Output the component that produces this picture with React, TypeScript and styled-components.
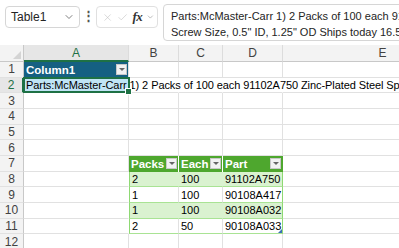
import React from "react"
import styled, { createGlobalStyle } from "styled-components"
import { ChevronDown, X, Check } from "lucide-react"

const GlobalStyle = createGlobalStyle`
    body {
        margin: 0;
        background: #ffffff;
        font-family: "Liberation Sans", Arial, sans-serif;
        overflow: hidden;
    }
`

const Page = styled.div`
    width: 399px;
    height: 248px;
    overflow: hidden;
    background: #ffffff;
`

const Toolbar = styled.div`
    display: flex;
    align-items: flex-start;
    height: 45px;
    padding: 4px 0 0 5px;
    box-sizing: border-box;
    background: #ffffff;
`

const NameBox = styled.div`
    display: flex;
    align-items: center;
    justify-content: space-between;
    width: 75px;
    height: 22px;
    margin-top: 2px;
    padding: 0 4px 0 5px;
    box-sizing: border-box;
    border: 1px solid #d6d6d6;
    border-radius: 4px;
    font-size: 12px;
    color: #242424;
`

const Dots = styled.div`
    width: 16px;
    margin-top: 5px;
    text-align: center;
    font-size: 13px;
    font-weight: bold;
    color: #555;
    line-height: 14px;
`

const FuncBox = styled.div`
    display: flex;
    align-items: center;
    gap: 4px;
    width: 62px;
    height: 22px;
    margin-top: 2px;
    padding: 0 2px 0 5px;
    box-sizing: border-box;
    border: 1px solid #e0e0e0;
    border-radius: 4px;
    color: #bdbdbd;
`

const Fx = styled.span`
    font-family: "Liberation Serif", "Times New Roman", serif;
    font-style: italic;
    font-weight: bold;
    font-size: 13px;
    color: #333;
    letter-spacing: -0.5px;
`

const FormulaBox = styled.div`
    flex: 1;
    height: 37px;
    margin-left: 5px;
    margin-right: -30px;
    padding: 3px 0 0 7px;
    box-sizing: border-box;
    border: 1px solid #d6d6d6;
    border-radius: 4px;
    font-size: 11px;
    line-height: 16px;
    color: #242424;
    overflow: hidden;
`

const FormulaLine = styled.div`
    white-space: nowrap;
`

const Sheet = styled.div`
    display: grid;
    grid-template-columns: 24px 105px 50px 44px 60px 200px;
    grid-template-rows: 17px;
    grid-auto-rows: 15.67px;
    font-size: 11px;
    color: #000;
`

const Corner = styled.div`
    position: relative;
    background: #f3f3f3;
    border-right: 1px solid #c8c8c8;
    border-bottom: 1px solid #c8c8c8;
    box-sizing: border-box;

    &::after {
        content: "";
        position: absolute;
        right: 2px;
        bottom: 2px;
        border-left: 8px solid transparent;
        border-bottom: 8px solid #d4d4d4;
    }
`

const ColHeader = styled.div<{ $active?: boolean }>`
    display: flex;
    align-items: center;
    justify-content: center;
    background: ${p => p.$active ? "#e6e6e6" : "#f3f3f3"};
    border-right: 1px solid #dcdcdc;
    border-bottom: ${p => p.$active ? "2px solid #1e7145" : "1px solid #c8c8c8"};
    box-sizing: border-box;
    font-size: 12px;
    color: ${p => p.$active ? "#1e7145" : "#424242"};
`

const RowHeader = styled.div<{ $active?: boolean }>`
    display: flex;
    align-items: center;
    justify-content: center;
    background: ${p => p.$active ? "#e6e6e6" : "#f3f3f3"};
    border-right: ${p => p.$active ? "2px solid #1e7145" : "1px solid #c8c8c8"};
    border-bottom: 1px solid #e1e1e1;
    box-sizing: border-box;
    font-size: 12px;
    color: ${p => p.$active ? "#1e7145" : "#424242"};
`

const Cell = styled.div<{ $open?: boolean }>`
    border-right: 1px solid ${p => p.$open ? "transparent" : "#e1e1e1"};
    border-bottom: 1px solid #e1e1e1;
    box-sizing: border-box;
`

const TableHead = styled.div<{ $bg: string; $edge?: string }>`
    display: flex;
    align-items: center;
    justify-content: space-between;
    padding: 0 1px 0 2px;
    background: ${p => p.$bg};
    border-right: 1px solid ${p => p.$edge || p.$bg};
    box-sizing: border-box;
    color: #ffffff;
    font-weight: bold;
    font-size: 11.5px;
    white-space: nowrap;
`

const FilterButton = styled.span`
    display: flex;
    align-items: center;
    justify-content: center;
    width: 11px;
    height: 11px;
    background: #f2f2f2;
    border: 1px solid #c8c8c8;
    box-sizing: border-box;

    &::after {
        content: "";
        border-left: 3px solid transparent;
        border-right: 3px solid transparent;
        border-top: 3px solid #666;
    }
`

const Selected = styled.div`
    position: relative;
    background: #c0e4f5;
    border-bottom: 1px solid #c0e4f5;
    box-sizing: border-box;
    padding-left: 2px;
    display: flex;
    align-items: center;
    white-space: nowrap;

    &::after {
        content: "";
        position: absolute;
        left: -1px;
        top: -1px;
        right: -1px;
        bottom: -1px;
        border: 2px solid #1e7145;
        z-index: 3;
    }
`

const FillHandle = styled.span`
    position: absolute;
    right: -3px;
    bottom: -3px;
    width: 5px;
    height: 5px;
    background: #1e7145;
    border: 1px solid #ffffff;
    z-index: 4;
`

const Overflow = styled.span`
    position: relative;
    z-index: 2;
    font-size: 11px;
    letter-spacing: -0.08px;
`

const Data = styled.div<{ $band: boolean; $right?: boolean; $left?: boolean }>`
    position: relative;
    display: flex;
    align-items: center;
    padding-left: 2px;
    background: ${p => p.$band ? "#daf2d0" : "#ffffff"};
    border-bottom: 1px solid #a9e394;
    border-right: 1px solid ${p => p.$right ? "#8ed973" : p.$band ? "#daf2d0" : "#e1e1e1"};
    border-left: ${p => p.$left ? "1px solid #8ed973" : "none"};
    box-sizing: border-box;
    white-space: nowrap;
`

const ResizeMark = styled.span`
    position: absolute;
    right: 0;
    bottom: 0;
    border-left: 4px solid transparent;
    border-bottom: 4px solid #3b6fb6;
`

const columns = ["A", "B", "C", "D", "E"]

const parts = [
    { packs: "2", each: "100", part: "91102A750" },
    { packs: "1", each: "100", part: "90108A417" },
    { packs: "1", each: "100", part: "90108A032" },
    { packs: "2", each: "50", part: "90108A033" },
]

const rowText = "Parts:McMaster-Carr 1) 2 Packs of 100 each 91102A750 Zinc-Plated Steel Split Lock Washer for 3/8\" Screw Size"

function Filler({ count, open }: { count: number; open?: boolean }) {
    return <>{Array.from({ length: count }, (_, i) => <Cell key={i} $open={open} />)}</>
}

function App() {
    const rows: React.ReactNode[] = []

    for (let r = 1; r <= 12; r++) {
        rows.push(<RowHeader key={`h${r}`} $active={r === 2}>{r}</RowHeader>)

        if (r === 1) {
            rows.push(
                <TableHead key="a1" $bg="#156082" $edge="#e1e1e1">
                    Column1<FilterButton />
                </TableHead>,
                <Filler key="f1" count={4} />
            )
        } else if (r === 2) {
            rows.push(
                <Selected key="a2">
                    <Overflow>{rowText}</Overflow>
                    <FillHandle />
                </Selected>,
                <Filler key="f2" count={4} open />
            )
        } else if (r === 7) {
            rows.push(
                <Cell key="a7" />,
                <TableHead key="b7" $bg="#4ea72e" $edge="#ffffff">Packs<FilterButton /></TableHead>,
                <TableHead key="c7" $bg="#4ea72e" $edge="#ffffff">Each<FilterButton /></TableHead>,
                <TableHead key="d7" $bg="#4ea72e">Part<FilterButton /></TableHead>,
                <Cell key="e7" />
            )
        } else if (r >= 8 && r <= 11) {
            const p = parts[r - 8]
            const band = r % 2 === 0
            rows.push(
                <Cell key={`a${r}`} $open />,
                <Data key={`b${r}`} $band={band} $left>{p.packs}</Data>,
                <Data key={`c${r}`} $band={band}>{p.each}</Data>,
                <Data key={`d${r}`} $band={band} $right>
                    {p.part}
                    {r === 11 && <ResizeMark />}
                </Data>,
                <Cell key={`e${r}`} />
            )
        } else {
            rows.push(<Filler key={`f${r}`} count={5} />)
        }
    }

    return (
        <Page>
            <GlobalStyle />
            <Toolbar>
                <NameBox>
                    Table1
                    <ChevronDown size={12} color="#555" strokeWidth={1.5} />
                </NameBox>
                <Dots>⋮</Dots>
                <FuncBox>
                    <X size={13} strokeWidth={1.2} />
                    <Check size={13} strokeWidth={1.2} />
                    <Fx>fx</Fx>
                    <ChevronDown size={10} color="#888" strokeWidth={1.5} />
                </FuncBox>
                <FormulaBox>
                    <FormulaLine>Parts:McMaster-Carr 1) 2 Packs of 100 each 91</FormulaLine>
                    <FormulaLine>Screw Size, 0.5" ID, 1.25" OD Ships today 16.58</FormulaLine>
                </FormulaBox>
            </Toolbar>
            <Sheet>
                <Corner />
                {columns.map(c => <ColHeader key={c} $active={c === "A"}>{c}</ColHeader>)}
                {rows}
            </Sheet>
        </Page>
    )
}

export default App
